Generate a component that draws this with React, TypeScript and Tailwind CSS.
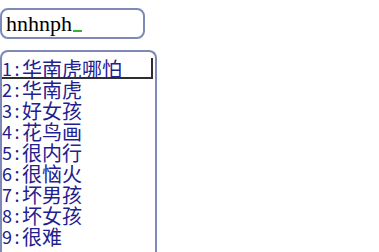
import React from "react"

const candidates = [
  "华南虎哪怕",
  "华南虎",
  "好女孩",
  "花鸟画",
  "很内行",
  "很恼火",
  "坏男孩",
  "坏女孩",
  "很难",
]

export default function App() {
  return (
    <div className="w-[379px] h-[252px] overflow-hidden bg-white flex flex-col items-start pt-[8px]">
      {/* pinyin input */}
      <div className="w-[145px] h-[34px] border-2 border-[#7d89b6] rounded-[8px] flex items-center pl-[4px] pt-[1px]">
        <span
          className="text-[22px] leading-none text-black"
          style={{ fontFamily: '"Liberation Serif", serif' }}
        >
          hnhnph
        </span>
        <span className="w-[9px] h-[2px] bg-[#2fb52f] mt-[14px] ml-[1px]" />
      </div>

      {/* candidate list */}
      <div className="mt-[11px] w-[157px] h-[220px] border-2 border-b-0 border-[#7d89b6] rounded-t-[8px] pt-[6px] pr-[2px]">
        {candidates.map((word, i) => (
          <div
            key={i}
            className={
              "h-[21px] flex items-center leading-[21px] text-[#1f2190] " +
              (i === 0 ? "shadow-[inset_-2px_-2px_0_#2e2e2e]" : "")
            }
            style={{ fontFamily: '"Noto Sans CJK SC", "Noto Sans", sans-serif' }}
          >
            <span className="w-[10px] text-center text-[18px]">{i + 1}</span>
            <span className="w-[10px] text-center text-[18px]">:</span>
            <span className="text-[20px]">{word}</span>
          </div>
        ))}
      </div>
    </div>
  )
}
